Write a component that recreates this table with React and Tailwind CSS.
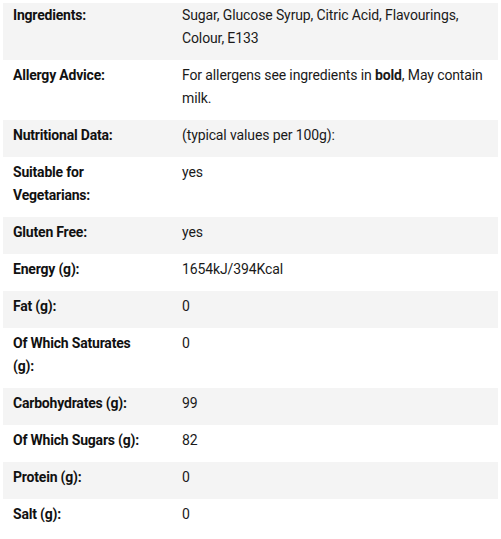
const rows = [
  ["Ingredients:", "Sugar, Glucose Syrup, Citric Acid, Flavourings, Colour, E133"],
  [
    "Allergy Advice:",
    <>
      For allergens see ingredients in <b className="font-bold">bold</b>, May contain milk.
    </>,
  ],
  ["Nutritional Data:", "(typical values per 100g):"],
  ["Suitable for Vegetarians:", "yes"],
  ["Gluten Free:", "yes"],
  ["Energy (g):", "1654kJ/394Kcal"],
  ["Fat (g):", "0"],
  ["Of Which Saturates (g):", "0"],
  ["Carbohydrates (g):", "99"],
  ["Of Which Sugars (g):", "82"],
  ["Protein (g):", "0"],
  ["Salt (g):", "0"],
];

const App = () => {
  return (
    <div className="bg-white w-[501px] h-[539px] overflow-hidden pt-[3px] px-[3px] font-['Roboto',sans-serif] text-[14px] leading-[23px] text-[#1a1a1a]">
      <div className="w-[495px]">
        {rows.map(([label, value], i) => (
          <div
            key={i}
            className={`flex pb-[10px] ${i === 0 ? "pt-[1px]" : "pt-[4px]"} ${
              i % 2 === 0 ? "bg-[#f4f4f4]" : "bg-white"
            }`}
          >
            <div className="w-[169px] shrink-0 pl-[10px] pr-[25px] font-bold tracking-[-0.2px] text-[#111]">
              {label}
            </div>
            <div className="flex-1 pl-[10px] pr-[10px] tracking-[-0.12px]">{value}</div>
          </div>
        ))}
      </div>
    </div>
  );
};

export default App;
